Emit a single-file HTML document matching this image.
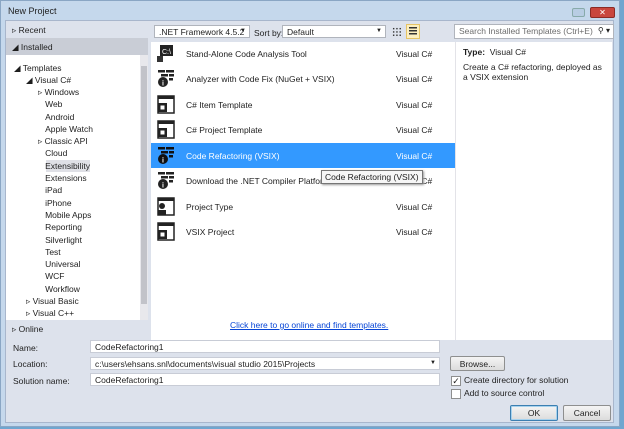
<!DOCTYPE html><html><head><style>
*{margin:0;padding:0;box-sizing:border-box}
body{width:624px;height:429px;overflow:hidden;background:#6fa6cf;font-family:"Liberation Sans",sans-serif;font-size:8.5px;color:#1e1e1e;position:relative}
.a{position:absolute}
.win{left:0;top:0;width:620px;height:427px;background:#c5d8ec;border:1px solid #8aa6c4}
.body{left:5px;top:20px;width:609px;height:403px;background:#dde2ec;border:1px solid #a8b6cc}
.t{white-space:nowrap}
.row{position:absolute;left:151px;width:304px;height:25px}
.row .n{position:absolute;left:35px;top:8px}
.row .v{position:absolute;left:245px;top:8px}
.ic{position:absolute;left:6px;top:3px;width:18px;height:19px}
.inp{position:absolute;background:#fff;border:1px solid #c8ccd6;height:13px;padding:1px 4px;font-size:8.5px;white-space:nowrap;overflow:hidden}
.ar{position:absolute;right:3px;top:2px;font-size:6px}
.btn{position:absolute;background:linear-gradient(#f4f4f4,#dcdcdc);border:1px solid #8e8f8f;border-radius:2px;text-align:center;font-size:8.5px;line-height:15px}
.cb{position:absolute;width:10px;height:10px;border:1px solid #8e8f8f;background:#fff}
</style></head><body>
<div class="a win"></div>
<div class="a t" style="left:8px;top:6px;font-size:9px">New Project</div>
<div class="a" style="left:572px;top:8px;width:13px;height:9px;background:#b8cde3;border:1px solid #8aa;border-radius:2px"></div>
<div class="a" style="left:590px;top:7px;width:25px;height:11px;background:#c9463d;border:1px solid #8b2b25;border-radius:2px;color:#fff;text-align:center;font-size:8px;line-height:9px">✕</div>
<div class="a body"></div>
<!-- left panel -->
<div class="a" style="left:6px;top:21px;width:142px;height:17px;background:#dde2ec"></div>
<div class="a t" style="left:12px;top:25px">▹ Recent</div>
<div class="a" style="left:6px;top:38px;width:142px;height:17px;background:#c9cdd6"></div>
<div class="a t" style="left:12px;top:42px">◢ Installed</div>
<div class="a" style="left:6px;top:55px;width:142px;height:265px;background:#fff"></div>
<div class="a" style="left:140px;top:55px;width:8px;height:265px;background:#e8e8ec"></div>
<div class="a" style="left:141px;top:66px;width:6px;height:238px;background:#c2c3c9"></div>
<div class="a" style="left:6px;top:320px;width:142px;height:20px;background:#dde2ec"></div>
<div class="a t" style="left:12px;top:324px">▹ Online</div>
<div class="a t" style="left:14px;top:62px;line-height:12.3px">◢ Templates</div>
<div class="a t" style="left:26px;top:74px;line-height:12.3px">◢ Visual C#</div>
<div class="a" style="left:46px;top:160px;width:44px;height:12px;background:#dfe0e6"></div>
<div class="a t" style="left:38px;top:86px;line-height:12.3px">▹ Windows<br>&nbsp;&nbsp;&nbsp;Web<br>&nbsp;&nbsp;&nbsp;Android<br>&nbsp;&nbsp;&nbsp;Apple Watch<br>▹ Classic API<br>&nbsp;&nbsp;&nbsp;Cloud<br>&nbsp;&nbsp;&nbsp;Extensibility<br>&nbsp;&nbsp;&nbsp;Extensions<br>&nbsp;&nbsp;&nbsp;iPad<br>&nbsp;&nbsp;&nbsp;iPhone<br>&nbsp;&nbsp;&nbsp;Mobile Apps<br>&nbsp;&nbsp;&nbsp;Reporting<br>&nbsp;&nbsp;&nbsp;Silverlight<br>&nbsp;&nbsp;&nbsp;Test<br>&nbsp;&nbsp;&nbsp;Universal<br>&nbsp;&nbsp;&nbsp;WCF<br>&nbsp;&nbsp;&nbsp;Workflow</div>
<div class="a t" style="left:26px;top:295px;line-height:12.3px">▹ Visual Basic<br>▹ Visual C++</div>
<!-- toolbar -->
<div class="a inp" style="left:154px;top:25px;width:96px;height:13px;border-color:#b0b4bc">.NET Framework 4.5.2<span class="ar">▼</span></div>
<div class="a t" style="left:254px;top:28px">Sort by:</div>
<div class="a inp" style="left:282px;top:25px;width:104px;height:13px;border-color:#b0b4bc">Default<span class="ar">▼</span></div>
<div class="a" style="left:392px;top:27px;width:10px;height:10px;background:radial-gradient(circle,#333 35%,transparent 40%) 0 0/3.3px 3.3px"></div>
<div class="a" style="left:406px;top:24px;width:14px;height:15px;background:#fcefc0;border:1px solid #e5c365"></div>
<div class="a" style="left:409px;top:27px;width:8px;height:9px;background:repeating-linear-gradient(#333 0 1.5px,transparent 1.5px 3px)"></div>
<div class="a inp" style="left:454px;top:24px;width:160px;height:15px;color:#6d6d6d;border-color:#b0b4bc">Search Installed Templates (Ctrl+E)<span class="ar" style="color:#222;font-size:8px;top:1px;background:#fff;padding-left:2px">⚲ ▾</span></div>
<!-- middle list -->
<div class="a" style="left:151px;top:42px;width:304px;height:298px;background:#fff"></div>
<div class="a" style="left:455px;top:42px;width:157px;height:298px;background:#fff;border-left:1px solid #e3e3e8"></div>
<div class="a" style="left:151px;top:143px;width:304px;height:25px;background:#3399ff"></div>
<div class="row" style="top:41px"><svg class="ic" viewBox="0 0 18 19"><rect x="3" y="1" width="13" height="11" fill="#222"/><text x="5" y="10" font-size="7" fill="#fff" font-family="Liberation Sans">C:\</text><rect x="0" y="12" width="6" height="6" fill="#333"/></svg><span class="n t">Stand-Alone Code Analysis Tool</span><span class="v">Visual C#</span></div>
<div class="row" style="top:66px"><svg class="ic" viewBox="0 0 18 19"><g fill="#222"><rect x="1" y="1" width="7" height="2.5"/><rect x="9" y="1" width="8" height="2.5"/><rect x="4" y="5" width="7" height="2.5"/><rect x="12" y="5" width="5" height="2.5"/><rect x="12" y="9" width="4" height="2.5"/><circle cx="6" cy="13" r="5"/></g><text x="5" y="16.5" font-size="7" fill="#fff" font-weight="bold">i</text></svg><span class="n t">Analyzer with Code Fix (NuGet + VSIX)</span><span class="v">Visual C#</span></div>
<div class="row" style="top:92px"><svg class="ic" viewBox="0 0 18 19"><rect x="1" y="1" width="16" height="17" fill="none" stroke="#222" stroke-width="1.5"/><rect x="1" y="1" width="16" height="3" fill="#222"/><rect x="1" y="8" width="9" height="9" fill="#222"/><rect x="3.5" y="10.5" width="4" height="4" fill="#fff"/></svg><span class="n t">C# Item Template</span><span class="v">Visual C#</span></div>
<div class="row" style="top:117px"><svg class="ic" viewBox="0 0 18 19"><rect x="1" y="1" width="16" height="17" fill="none" stroke="#222" stroke-width="1.5"/><rect x="1" y="1" width="16" height="3" fill="#222"/><rect x="1" y="8" width="9" height="9" fill="#222"/><rect x="3.5" y="10.5" width="4" height="4" fill="#fff"/></svg><span class="n t">C# Project Template</span><span class="v">Visual C#</span></div>
<div class="row" style="top:143px;color:#fff"><svg class="ic" viewBox="0 0 18 19"><g fill="#111"><rect x="1" y="1" width="7" height="2.5"/><rect x="9" y="1" width="8" height="2.5"/><rect x="4" y="5" width="7" height="2.5"/><rect x="12" y="5" width="5" height="2.5"/><rect x="12" y="9" width="4" height="2.5"/><circle cx="6" cy="13" r="5"/></g><text x="5" y="16.5" font-size="7" fill="#fff" font-weight="bold">i</text></svg><span class="n t">Code Refactoring (VSIX)</span><span class="v">Visual C#</span></div>
<div class="row" style="top:168px"><svg class="ic" viewBox="0 0 18 19"><g fill="#222"><rect x="1" y="1" width="7" height="2.5"/><rect x="9" y="1" width="8" height="2.5"/><rect x="4" y="5" width="7" height="2.5"/><rect x="12" y="5" width="5" height="2.5"/><rect x="12" y="9" width="4" height="2.5"/><circle cx="6" cy="13" r="5"/></g><text x="5" y="16.5" font-size="7" fill="#fff" font-weight="bold">i</text></svg><span class="n t">Download the .NET Compiler Platform SDK</span><span class="v">Visual C#</span></div>
<div class="row" style="top:194px"><svg class="ic" viewBox="0 0 18 19"><rect x="1" y="1" width="16" height="17" fill="none" stroke="#222" stroke-width="1.5"/><rect x="1" y="1" width="16" height="3" fill="#222"/><circle cx="5" cy="9" r="3" fill="#222"/><rect x="1" y="13" width="8" height="5" fill="#222"/></svg><span class="n t">Project Type</span><span class="v">Visual C#</span></div>
<div class="row" style="top:219px"><svg class="ic" viewBox="0 0 18 19"><rect x="1" y="1" width="16" height="17" fill="none" stroke="#222" stroke-width="1.5"/><rect x="1" y="1" width="16" height="3" fill="#222"/><rect x="1" y="8" width="9" height="9" fill="#222"/><rect x="3.5" y="10.5" width="4" height="4" fill="#fff"/></svg><span class="n t">VSIX Project</span><span class="v">Visual C#</span></div>
<div class="a t" style="left:321px;top:170px;background:#f6f6f6;border:1px solid #767676;padding:1px 3px;font-size:8.5px;box-shadow:1px 1px 2px #999">Code Refactoring (VSIX)</div>
<div class="a t" style="left:230px;top:320px;color:#0645d6;text-decoration:underline">Click here to go online and find templates.</div>
<!-- right -->
<div class="a t" style="left:463px;top:47px"><b>Type:</b>&nbsp; Visual C#</div>
<div class="a" style="left:463px;top:62px;width:140px;line-height:10px">Create a C# refactoring, deployed as a VSIX extension</div>
<!-- bottom -->
<div class="a t" style="left:13px;top:343px">Name:</div>
<div class="a t" style="left:13px;top:359px">Location:</div>
<div class="a t" style="left:13px;top:376px">Solution name:</div>
<div class="inp" style="left:90px;top:340px;width:350px">CodeRefactoring1</div>
<div class="inp" style="left:90px;top:357px;width:350px">c:\users\ehsans.snl\documents\visual studio 2015\Projects<span class="ar">▼</span></div>
<div class="inp" style="left:90px;top:373px;width:350px">CodeRefactoring1</div>
<div class="btn" style="left:450px;top:356px;width:55px;height:15px">Browse...</div>
<div class="cb" style="left:451px;top:376px;font-size:9px;line-height:8px;text-align:center">✓</div>
<div class="a t" style="left:464px;top:375px">Create directory for solution</div>
<div class="cb" style="left:451px;top:389px"></div>
<div class="a t" style="left:464px;top:388px">Add to source control</div>
<div class="btn" style="left:510px;top:405px;width:48px;height:16px;border-color:#3c7fb1;box-shadow:inset 0 0 0 1px #a6d2ee">OK</div>
<div class="btn" style="left:563px;top:405px;width:48px;height:16px">Cancel</div>
</body></html>
